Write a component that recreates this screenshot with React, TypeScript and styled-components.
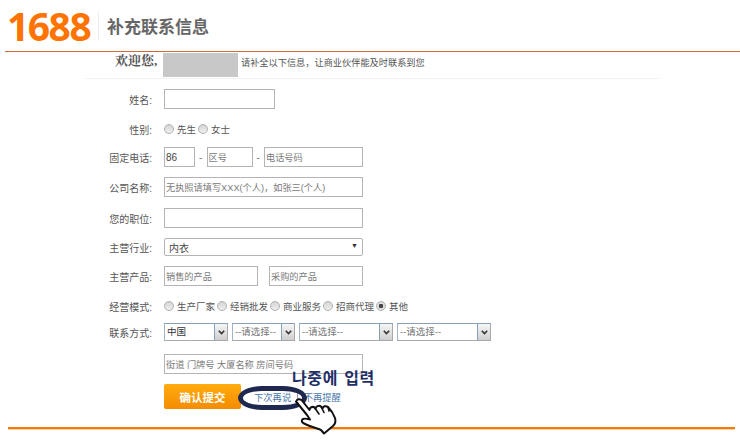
import React from "react";
import styled, { createGlobalStyle } from "styled-components";

const GlobalStyle = createGlobalStyle`
  html, body {
    margin: 0;
    padding: 0;
    background: #ffffff;
  }
  body {
    font-family: "Liberation Sans", "Noto Sans CJK SC", sans-serif;
    font-size: 10px;
    color: #555555;
  }
`;

const App = () => {
  return (
    <Page>
      <GlobalStyle />
      <Header>
        <Logo>1688</Logo>
        <HeaderTitle>补充联系信息</HeaderTitle>
      </Header>
      <Main>
        <Welcome>
          <Hello>欢迎您,</Hello>
          <Masked />
          <WelcomeText>请补全以下信息，让商业伙伴能及时联系到您</WelcomeText>
        </Welcome>
        <Form>
          <Row $top={10} $height={20}>
            <Label>姓名:</Label>
            <Field $width={111} />
          </Row>
          <Row $top={10} $height={20}>
            <Label>性别:</Label>
            <RadioGroup>
              <Radio>先生</Radio>
              <Radio>女士</Radio>
            </RadioGroup>
          </Row>
          <Row $top={8} $height={20}>
            <Label>固定电话:</Label>
            <Field $width={31} defaultValue="86" />
            <Dash>-</Dash>
            <Field $width={46} placeholder="区号" />
            <Dash>-</Dash>
            <Field $width={99} placeholder="电话号码" />
          </Row>
          <Row $top={10} $height={20}>
            <Label>公司名称:</Label>
            <Field $width={199} placeholder="无执照请填写XXX(个人)，如张三(个人)" />
          </Row>
          <Row $top={11} $height={20}>
            <Label>您的职位:</Label>
            <Field $width={199} />
          </Row>
          <Row $top={10} $height={18}>
            <Label>主营行业:</Label>
            <WideSelect>
              内衣
              <Caret>▼</Caret>
            </WideSelect>
          </Row>
          <Row $top={10} $height={20}>
            <Label>主营产品:</Label>
            <ProductGroup>
              <Field $width={94} placeholder="销售的产品" />
              <Field $width={94} placeholder="采购的产品" />
            </ProductGroup>
          </Row>
          <Row $top={10} $height={20}>
            <Label>经营模式:</Label>
            <RadioGroup>
              <Radio>生产厂家</Radio>
              <Radio>经销批发</Radio>
              <Radio>商业服务</Radio>
              <Radio>招商代理</Radio>
              <Radio $checked>其他</Radio>
            </RadioGroup>
          </Row>
          <Row $top={7} $height={18}>
            <Label>联系方式:</Label>
            <SelectGroup>
              <DropDown $width={64} $dark>中国</DropDown>
              <DropDown $width={63}>--请选择--</DropDown>
              <DropDown $width={94}>--请选择--</DropDown>
              <DropDown $width={94}>--请选择--</DropDown>
            </SelectGroup>
          </Row>
          <Row $top={13} $height={20}>
            <Label />
            <Field $width={199} placeholder="街道 门牌号 大厦名称 房间号码" />
          </Row>
          <ActionRow>
            <Label />
            <Submit>确认提交</Submit>
            <Links>
              <LaterLink>下次再说</LaterLink>
              <Sep>|</Sep>
              <LaterLink>不再提醒</LaterLink>
            </Links>
            <Note>나중에 입력</Note>
            <Ring />
            <Hand viewBox="0 0 44 38">
              <path
                d="M2 4.5 C3 2 6 1.5 8 3.5 L15.5 13 C15.5 10.5 18.5 9 20.5 10.5 L21.5 12 C21.5 9 25 8 27 9.5 L28.5 11.5 C29 9 32 8.5 34 10 C37 13 39.5 17 41 21 C42 24 41 27 39 29 L30 36.5 L27 33 C23 31.5 15 29 10 26.5 C7.5 25.5 7 23 9 22 C11 21 14 22 16 22.5 L13 18 Z"
                fill="#ffffff"
                stroke="#111111"
                strokeWidth="2"
                strokeLinejoin="round"
              />
              <path d="M20.5 10.5 L25 17 M27 9.5 L30 15.5 M34 10 L35 14" fill="none" stroke="#111111" strokeWidth="1.6" strokeLinecap="round" />
            </Hand>
          </ActionRow>
        </Form>
      </Main>
      <Footer />
    </Page>
  );
};

export default App;

const Radio = ({ children, $checked }: { children: React.ReactNode; $checked?: boolean }) => (
  <RadioItem>
    <RadioDot $checked={$checked} />
    {children}
  </RadioItem>
);

const DropDown = ({ children, $width, $dark }: { children: React.ReactNode; $width: number; $dark?: boolean }) => (
  <DropBox $width={$width}>
    <DropValue $dark={$dark}>{children}</DropValue>
    <DropButton>
      <svg width="7" height="5" viewBox="0 0 7 5">
        <path d="M0.8 0.8 L3.5 3.6 L6.2 0.8" fill="none" stroke="#333333" strokeWidth="1.6" />
      </svg>
    </DropButton>
  </DropBox>
);

const Page = styled.div`
  width: 740px;
  height: 444px;
  overflow: hidden;
  display: flex;
  flex-direction: column;
`;

const Header = styled.div`
  height: 51px;
  flex-shrink: 0;
  margin-left: 5px;
  display: flex;
  align-items: center;
  border-bottom: 1px solid #d0683a;
`;

const Logo = styled.div`
  width: 94px;
  height: 30px;
  padding-left: 2px;
  box-sizing: border-box;
  border-right: 1px solid #eeeeee;
  font-family: "Open Sans", sans-serif;
  font-weight: 700;
  font-size: 39px;
  line-height: 30px;
  letter-spacing: -1.5px;
  color: #ff7300;
`;

const HeaderTitle = styled.div`
  margin-left: 8px;
  font-size: 17px;
  font-weight: 700;
  color: #666666;
`;

const Main = styled.div`
  margin-left: 85px;
  width: 575px;
`;

const Welcome = styled.div`
  height: 25px;
  padding: 1px 0 0 30px;
  display: flex;
  align-items: flex-start;
  border-bottom: 1px solid #f2f2f2;
`;

const Hello = styled.div`
  width: 48px;
  font-family: "Liberation Serif", "Noto Serif CJK SC", "Noto Sans CJK SC", serif;
  font-size: 13px;
  font-weight: 700;
  line-height: 15px;
  color: #555555;
`;

const Masked = styled.div`
  width: 75px;
  height: 24px;
  background: #c8c8c8;
`;

const WelcomeText = styled.div`
  margin: 2px 0 0 3px;
  font-size: 9.2px;
  line-height: 16px;
  color: #555555;
`;

const Form = styled.div`
  display: flex;
  flex-direction: column;
`;

const Row = styled.div<{ $top: number; $height: number }>`
  display: flex;
  align-items: center;
  margin-top: ${(p) => p.$top}px;
  height: ${(p) => p.$height}px;
`;

const Label = styled.div`
  width: 67px;
  margin-right: 12px;
  flex-shrink: 0;
  text-align: right;
  font-size: 10px;
  color: #555555;
`;

const Field = styled.input<{ $width: number }>`
  width: ${(p) => p.$width}px;
  height: 20px;
  box-sizing: border-box;
  padding: 0 1px;
  border: 1px solid #b4b4b4;
  background: #ffffff;
  outline: none;
  font-family: inherit;
  font-size: 10px;
  color: #444444;

  &::placeholder {
    font-size: 9.2px;
    color: #7a7a7a;
    opacity: 1;
  }
`;

const Dash = styled.span`
  width: 11.5px;
  text-align: center;
  font-size: 10px;
  color: #777777;
`;

const RadioGroup = styled.div`
  display: flex;
  align-items: center;
  gap: 2px;
`;

const RadioItem = styled.label`
  display: flex;
  align-items: center;
  font-size: 9.5px;
  color: #555555;
`;

const RadioDot = styled.span<{ $checked?: boolean }>`
  width: 10px;
  height: 10px;
  margin-right: 3px;
  box-sizing: border-box;
  border-radius: 50%;
  border: 1px solid #b0b0b0;
  background: ${(p) =>
    p.$checked ? "radial-gradient(circle, #444444 0 2px, #dddddd 2.5px)" : "linear-gradient(#d4d4d4, #f0f0f0)"};
`;

const WideSelect = styled.div`
  position: relative;
  width: 199px;
  height: 18px;
  box-sizing: border-box;
  padding-left: 4px;
  display: flex;
  align-items: center;
  border: 1px solid #b4b4b4;
  border-radius: 2px;
  font-size: 10px;
  color: #444444;
`;

const Caret = styled.span`
  position: absolute;
  right: 4px;
  top: 3px;
  font-size: 7px;
  color: #333333;
`;

const ProductGroup = styled.div`
  display: flex;
  gap: 11px;
`;

const SelectGroup = styled.div`
  display: flex;
  gap: 4px;
`;

const DropBox = styled.div<{ $width: number }>`
  width: ${(p) => p.$width}px;
  height: 18px;
  box-sizing: border-box;
  display: flex;
  border: 1px solid #a9a9a9;
  border-left-color: #9db4cc;
  border-top-color: #86a0bd;
`;

const DropValue = styled.div<{ $dark?: boolean }>`
  flex: 1;
  padding-left: 2px;
  overflow: hidden;
  white-space: nowrap;
  line-height: 16px;
  font-size: 9.5px;
  color: ${(p) => (p.$dark ? "#333333" : "#777777")};
`;

const DropButton = styled.div`
  width: 12px;
  display: flex;
  align-items: center;
  justify-content: center;
  border-left: 1px solid #86a0bd;
  background: linear-gradient(#f6f6f6, #cfcfcf);
`;

const ActionRow = styled.div`
  position: relative;
  display: flex;
  align-items: center;
  margin-top: 10px;
  height: 25px;
`;

const Submit = styled.button`
  width: 77px;
  height: 25px;
  padding: 0;
  border: none;
  border-radius: 2px;
  background: linear-gradient(#ffac0e, #f48c00);
  font-family: inherit;
  font-size: 11.5px;
  font-weight: 700;
  color: #ffffff;
`;

const Links = styled.div`
  margin-left: 13px;
  display: flex;
  align-items: center;
  gap: 5px;
`;

const LaterLink = styled.a`
  font-size: 9.3px;
  color: #4a78a8;
`;

const Sep = styled.span`
  font-size: 9.3px;
  color: #4a78a8;
`;

const Note = styled.div`
  position: absolute;
  left: 207px;
  top: -16px;
  font-family: "Noto Sans CJK KR", sans-serif;
  font-size: 16px;
  font-weight: 700;
  line-height: 18px;
  letter-spacing: 0.6px;
  word-spacing: 2px;
  color: #1f2f66;
  white-space: nowrap;
`;

const Ring = styled.div`
  position: absolute;
  left: 153px;
  top: 2px;
  width: 69px;
  height: 24px;
  box-sizing: border-box;
  border: 5px solid #1f2950;
  border-radius: 24px / 12px;
`;

const Hand = styled.svg`
  position: absolute;
  left: 209px;
  top: 13px;
  width: 44px;
  height: 38px;
`;

const Footer = styled.div`
  flex-shrink: 0;
  margin: 18px 0 0 8px;
  width: 727px;
  height: 2px;
  background: #f47a0a;
  border-bottom: 1px solid #fbd0a8;
`;
